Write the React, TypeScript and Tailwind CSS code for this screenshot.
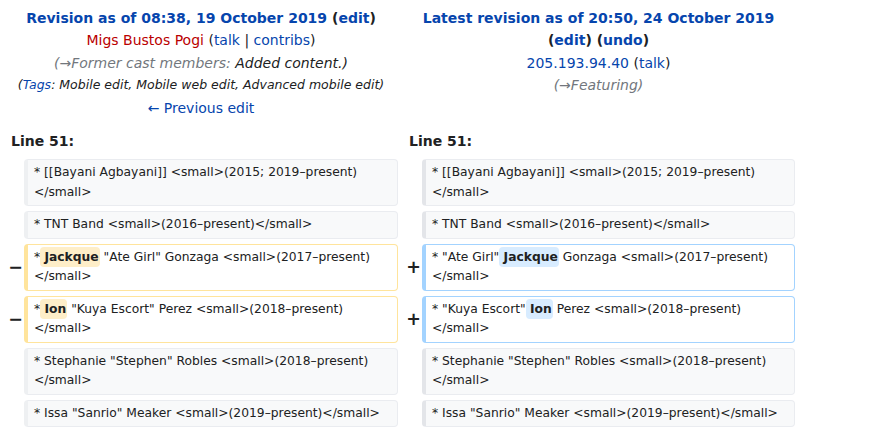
import React from "react";

const font = { fontFamily: '"DejaVu Sans", sans-serif' };

type Seg = { t: string; hl?: boolean };

const Line = ({ segs, kind, side }: { segs: Seg[]; kind: "ctx" | "del" | "add"; side: "l" | "r" }) => {
  const box =
    kind === "ctx"
      ? side === "l"
        ? "bg-[#f8f9fa] border-[#eaecf0] border-l-[#eef0f2]"
        : "bg-[#f8f9fa] border-[#eaecf0] border-l-[#e3e5e9]"
      : kind === "del"
      ? "bg-white border-[#ffe49c]"
      : "bg-white border-[#a3d3ff]";
  const hl = kind === "del" ? "bg-[#feeec8]" : "bg-[#d8ecff]";
  return (
    <div
      className={`border border-l-4 rounded-[4px] px-[6px] py-[3px] text-[12.3px] leading-[19.5px] text-[#202122] ${box}`}
    >
      {segs.map((s, i) =>
        s.hl ? (
          <span key={i} className={`font-bold rounded-[4px] py-[3px] pr-[1px] ${hl}`}>
            {s.t}
          </span>
        ) : (
          <span key={i}>{s.t}</span>
        )
      )}
    </div>
  );
};

const Marker = ({ ch }: { ch?: string }) => (
  <div className="flex items-center justify-end font-bold text-[17.5px] text-[#202122]">
    <span className="-mr-[3px]">{ch}</span>
  </div>
);

const rows: { l: Seg[]; r: Seg[]; kind: "ctx" | "chg" }[] = [
  { kind: "ctx", l: [{ t: "* [[Bayani Agbayani]] <small>(2015; 2019–present)</small>" }], r: [{ t: "* [[Bayani Agbayani]] <small>(2015; 2019–present)</small>" }] },
  { kind: "ctx", l: [{ t: "* TNT Band <small>(2016–present)</small>" }], r: [{ t: "* TNT Band <small>(2016–present)</small>" }] },
  {
    kind: "chg",
    l: [{ t: "*" }, { t: " Jackque", hl: true }, { t: " \"Ate Girl\" Gonzaga <small>(2017–present)</small>" }],
    r: [{ t: "* \"Ate Girl\"" }, { t: " Jackque", hl: true }, { t: " Gonzaga <small>(2017–present)</small>" }],
  },
  {
    kind: "chg",
    l: [{ t: "*" }, { t: " Ion", hl: true }, { t: " \"Kuya Escort\" Perez <small>(2018–present)</small>" }],
    r: [{ t: "* \"Kuya Escort\"" }, { t: " Ion", hl: true }, { t: " Perez <small>(2018–present)</small>" }],
  },
  { kind: "ctx", l: [{ t: "* Stephanie \"Stephen\" Robles <small>(2018–present)</small>" }], r: [{ t: "* Stephanie \"Stephen\" Robles <small>(2018–present)</small>" }] },
  { kind: "ctx", l: [{ t: "* Issa \"Sanrio\" Meaker <small>(2019–present)</small>" }], r: [{ t: "* Issa \"Sanrio\" Meaker <small>(2019–present)</small>" }] },
];

const A = ({ children }: { children: React.ReactNode }) => <span className="text-[#0645ad]">{children}</span>;

export default function App() {
  return (
    <div className="bg-white min-h-screen text-[#202122]" style={font}>
      <div className="grid grid-cols-[16px_374px_16px_373px] gap-x-1 gap-y-[5px] px-1 w-[799px]">
        <div className="col-span-2 text-center text-[14px] leading-[22.4px] pt-[7px]">
          <div className="font-bold">
            <A>Revision as of 08:38, 19 October 2019</A> (<A>edit</A>)
          </div>
          <div>
            <span className="text-[#ba0000]">Migs Bustos Pogi</span> (<A>talk</A> | <A>contribs</A>)
          </div>
          <div className="italic">
            <span className="text-[#72777d]">(→Former cast members:</span> Added content.)
          </div>
          <div className="italic text-[12.5px]">
            (<A>Tags</A>: Mobile edit, Mobile web edit, Advanced mobile edit)
          </div>
          <div>
            <A>← Previous edit</A>
          </div>
        </div>
        <div className="col-span-2 text-center text-[14px] leading-[22.4px] pt-[7px]">
          <div className="font-bold">
            <A>Latest revision as of 20:50, 24 October 2019</A> (<A>edit</A>) (<A>undo</A>)
          </div>
          <div>
            <A>205.193.94.40</A> (<A>talk</A>)
          </div>
          <div className="italic text-[#72777d]">(→Featuring)</div>
        </div>

        <div className="col-span-2 font-bold text-[14px] leading-[22px] pl-[7px] mt-[6px] mb-[2px]">Line 51:</div>
        <div className="col-span-2 font-bold text-[14px] leading-[22px] pl-[7px] mt-[6px] mb-[2px]">Line 51:</div>

        {rows.map((r, i) => (
          <React.Fragment key={i}>
            <Marker ch={r.kind === "chg" ? "−" : undefined} />
            <Line segs={r.l} kind={r.kind === "chg" ? "del" : "ctx"} side="l" />
            <Marker ch={r.kind === "chg" ? "+" : undefined} />
            <Line segs={r.r} kind={r.kind === "chg" ? "add" : "ctx"} side="r" />
          </React.Fragment>
        ))}
      </div>
    </div>
  );
}
